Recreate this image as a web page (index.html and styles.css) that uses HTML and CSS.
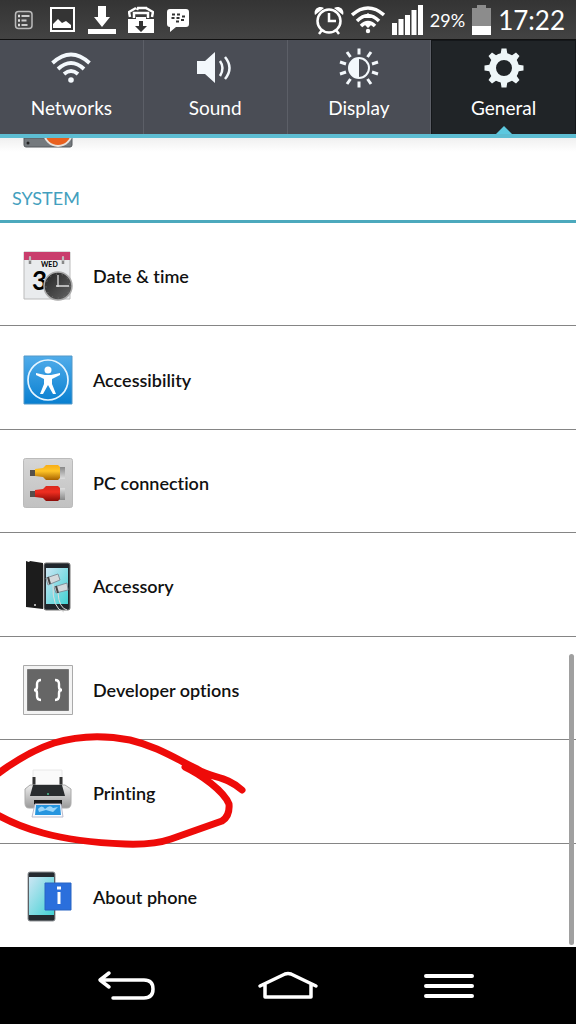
FILE: index.html
```html
<!DOCTYPE html>
<html lang="en">
<head>
<meta charset="utf-8">
<meta name="viewport" content="width=device-width, initial-scale=1">
<title>Settings</title>
<link rel="stylesheet" href="styles.css">
</head>
<body>
<div class="phone">
  <header class="status">
    <div class="status-group notices">
      <svg width="20" height="20" viewBox="0 0 20 20"><rect x="1.500" y="1.500" width="16.500" height="17" rx="3" fill="#444" stroke="#bbb" stroke-width="1.500"/><path d="M4 6h2M4 10.500h2M4 15h2" stroke="#ddd" stroke-width="2.500"/><path d="M7.500 6h8M7.500 10.500h5M7.500 15h6" stroke="#ccc" stroke-width="2"/></svg>
      <svg width="26" height="26" viewBox="0 0 26 26"><rect x="1" y="1" width="23" height="23" fill="#343434" stroke="#fff" stroke-width="2"/><path d="M3 21v-4l5-5 4 4 4-2 5 4v3z" fill="#fff"/></svg>
      <svg width="28" height="30" viewBox="0 0 28 30"><path d="M10 1h8v11h4l-8 10-8-10h4zM0 24h28v5H0z" fill="#fff"/></svg>
      <svg width="26" height="30" viewBox="0 0 26 30"><path d="M2 12L1 7l7-4M24 12l1-5-7-4" fill="none" stroke="#fff" stroke-width="2.500"/><path d="M6 13V8h14v5M9 5l1-2h9" fill="none" stroke="#fff" stroke-width="2.500"/><path d="M0 14h8v-2h10v2h8v14H0z" fill="#fff"/><path d="M11 16h4v5h4l-6 6-6-6h4z" fill="#333"/></svg>
      <svg width="24" height="26" viewBox="0 0 24 26"><path d="M4 2h16q3 0 3 3v12q0 3-3 3H10l-6 5v-5q-3 0-3-3V5q0-3 3-3z" fill="#fff"/><path d="M6 7.500h3M11 7.500h3M5.500 11h3M10.500 11h3M16 9.500h3M10 14.500h3M15 13h3" stroke="#333" stroke-width="2.200"/></svg>
    </div>
    <div class="status-group system">
      <svg width="30" height="30" viewBox="0 0 30 30"><g fill="none" stroke="#fff" stroke-width="2.500"><circle cx="15" cy="16" r="11.500"/><path d="M15 8v8h7M8 25l-3 4M22 25l3 4"/></g><path d="M1 10C-1 4 5 0 10 3zM29 10C31 4 25 0 20 3z" fill="#fff"/></svg>
      <svg width="34" height="30" viewBox="0 0 34 30"><g fill="none" stroke="#fff" stroke-width="3.500"><path d="M1 10Q17-4 33 10M6 16Q17 5 28 16"/><path d="M10 21q7-7 14 0"/></g><path d="M17 8l5 5H12zM17 23l-5-5h10z" fill="#fff"/><circle cx="17" cy="26" r="2.200" fill="#fff"/></svg>
      <svg width="31" height="32" viewBox="0 0 31 32"><path d="M0 19h5v12H0zM6.500 15h5v16h-5zM13 11h5v20h-5zM19.500 6h5v25h-5zM26 1h5v30h-5z" fill="#fff"/></svg>
      <span class="percent">29%</span>
      <svg width="19" height="32" viewBox="0 0 19 32"><path d="M5 1h9v3h5v20H0V4h5z" fill="#8c8c8c"/><path d="M0 22h19v9H0z" fill="#fff"/></svg>
      <time class="clock">17:22</time>
    </div>
  </header>

  <nav class="tabs">
    <button class="tab" type="button">
      <svg width="42" height="42" viewBox="0 0 42 42"><g fill="none" stroke="#f3f8fc" stroke-width="3.800"><path d="M2.500 16Q21-1 39.500 16M8 22Q21 10 34 22M14 27q7-6 14 0"/></g><circle cx="21" cy="33" r="2.800" fill="#f3f8fc"/></svg>
      <span>Networks</span>
    </button>
    <button class="tab" type="button">
      <svg width="42" height="42" viewBox="0 0 42 42"><path d="M3 14h8L21 5v31L11 27H3z" fill="#f3f8fc"/><path d="M26 14q5 7 0 15M31 10q9 11 0 22" fill="none" stroke="#f3f8fc" stroke-width="2.500"/></svg>
      <span>Sound</span>
    </button>
    <button class="tab" type="button">
      <svg width="42" height="42" viewBox="0 0 42 42"><circle cx="21" cy="21" r="10" fill="none" stroke="#f3f8fc" stroke-width="2"/><path d="M21 11a10 10 0 0 0 0 20z" fill="#f3f8fc"/><path d="M21 1.500v6M21 34.500v6M9 5l3.500 5M33 5l-3.500 5M9 37l3.500-5M33 37l-3.500-5M2 15l6 2M40 15l-6 2M2 27l6-2M40 27l-6-2" stroke="#f3f8fc" stroke-width="3"/></svg>
      <span>Display</span>
    </button>
    <button class="tab tab-active" type="button" aria-current="page">
      <svg width="42" height="42" viewBox="0 0 42 42"><circle cx="21" cy="21" r="11.500" fill="none" stroke="#eef6f8" stroke-width="7"/><path d="M17.500 8l1-6.500h5l1 6.500zM17.500 34l1 6.500h5l1-6.500zM8 17.500l-6.500 1v5l6.500 1zM34 17.500l6.500 1v5l-6.500 1zM9 14L5.500 9 9 5.500 14 9zM33 14l3.500-5L33 5.500 28 9zM9 28l-3.500 5L9 36.500l5-3.500zM33 28l3.500 5-3.500 3.500-5-3.500z" fill="#eef6f8"/></svg>
      <span>General</span>
    </button>
  </nav>

  <main class="content">
    <div class="previous">
      <svg width="50" height="10" viewBox="0 0 50 10"><path d="M1 0h48v7q0 2-2 2H3q-2 0-2-2z" fill="#74797d" stroke="#55595c"/><circle cx="5" cy="5" r="1.500" fill="#222"/><circle cx="35" cy="-6" r="15" fill="#e8e2dc"/><circle cx="35" cy="-6" r="13" fill="#e9601e"/></svg>
    </div>
    <h2 class="heading">SYSTEM</h2>
    <ul class="list">
      <li class="item"><a class="row" href="#date">
        <svg width="50" height="50" viewBox="0 0 50 50"><defs><linearGradient id="clockface" x2="1" y2="1"><stop stop-color="#222"/><stop offset="1" stop-color="#666"/></linearGradient></defs><path d="M1 1h46v47H1z" fill="#e9ebed" stroke="#bbb"/><path d="M1 1h46v8H1z" fill="#c93d6c"/><path d="M7 6v7M40 6v7" stroke="#888" stroke-width="2.500"/><path d="M7 5v5M40 5v5" stroke="#eee"/><text x="18" y="16" class="day-name">WED</text><text x="9" y="39" class="day-number">3</text><circle cx="35" cy="35" r="14" fill="url(#clockface)" stroke="#aaa" stroke-width="1.500"/><circle cx="35" cy="35" r="12" fill="none" stroke="#777" stroke-dasharray="1 5"/><path d="M35 24v12M33 35h13" stroke="#ddd" stroke-width="1.300"/></svg>
        <span>Date &amp; time</span></a></li>
      <li class="item"><a class="row" href="#accessibility">
        <svg width="50" height="50" viewBox="0 0 50 50"><defs><linearGradient id="access" x2="0" y2="1"><stop stop-color="#50acea"/><stop offset="1" stop-color="#087fd0"/></linearGradient></defs><path d="M1 1h48v48H1z" fill="url(#access)" stroke="#5298c8"/><circle cx="25" cy="25" r="20" fill="none" stroke="#e6f5ff" stroke-width="1.700"/><circle cx="25" cy="15" r="3.500" fill="#fff"/><path d="M13 18l9 2h6l9-2v2l-8 4v5l4 10h-3l-5-9-5 9h-3l4-10v-5l-8-4z" fill="#fff"/></svg>
        <span>Accessibility</span></a></li>
      <li class="item"><a class="row" href="#pc">
        <svg width="50" height="50" viewBox="0 0 50 50"><defs><linearGradient id="plugbase" x2="0" y2="1"><stop stop-color="#d6d6d6"/><stop offset="1" stop-color="#c1c1c1"/></linearGradient><linearGradient id="yellow" x2="0" y2="1"><stop stop-color="#f7ad16"/><stop offset=".4" stop-color="#ffc528"/><stop offset="1" stop-color="#a76200"/></linearGradient><linearGradient id="red" x2="0" y2="1"><stop stop-color="#d92a1d"/><stop offset=".4" stop-color="#ef2e20"/><stop offset="1" stop-color="#8c0b06"/></linearGradient><linearGradient id="metal" x2="0" y2="1"><stop stop-color="#888"/><stop offset=".5" stop-color="#fff"/><stop offset="1" stop-color="#888"/></linearGradient></defs><rect x=".5" y=".5" width="49" height="49" rx="2" fill="url(#plugbase)" stroke="#bbb"/><path d="M7 12h7v6H7zM7 33h7v6H7z" fill="#56504c"/><path d="M36 9h6v12h-6zM36 30h6v12h-6z" fill="url(#metal)"/><path d="M12 11l8-1 3-3h12l2 2v11l-2 2H23l-3-3-8-1z" fill="url(#yellow)"/><path d="M12 32l8-1 3-3h12l2 2v11l-2 2H23l-3-3-8-1z" fill="url(#red)"/></svg>
        <span>PC connection</span></a></li>
      <li class="item"><a class="row" href="#accessory">
        <svg width="50" height="54" viewBox="0 0 50 54"><defs><linearGradient id="screen" x2="1" y2="1"><stop stop-color="#cce6f4"/><stop offset="1" stop-color="#42d2d4"/></linearGradient></defs><path d="M3 2l3 1 1-1 13 2v46L3 48z" fill="#1c1c1c"/><circle cx="12" cy="46" r="1" fill="#ddd"/><rect x="21" y="4" width="26" height="47" rx="2" fill="#20262c" stroke="#777"/><path d="M23 9h22v36H23z" fill="url(#screen)"/><path d="M23 19l12-4 2 6-12 5zM31 28l13-4 1 7-12 3z" fill="#d4d9dc" stroke="#83919b"/><path d="M25 18l2 7M33 27l2 7" stroke="#444" stroke-width="2"/><path d="M30 25q-1 25 11 28M35 34q1 15 9 17" fill="none" stroke="#ddd"/></svg>
        <span>Accessory</span></a></li>
      <li class="item"><a class="row" href="#developer">
        <svg width="50" height="50" viewBox="0 0 50 50"><path d="M.5.500h49v49H.5z" fill="#f3f3f3" stroke="#aaa"/><path d="M4.500 4.500h41v41h-41z" fill="#666" stroke="#777"/><path d="M18 15q-4 0-4 4v3q0 3-3 3 3 0 3 3v3q0 4 4 4M32 15q4 0 4 4v3q0 3 3 3-3 0-3 3v3q0 4-4 4" fill="none" stroke="#fff" stroke-width="2.400"/></svg>
        <span>Developer options</span></a></li>
      <li class="item"><a class="row" href="#printing">
        <svg width="50" height="50" viewBox="0 0 50 50"><defs><linearGradient id="printer" x2="0" y2="1"><stop stop-color="#eee"/><stop offset="1" stop-color="#999"/></linearGradient></defs><path d="M10 2h29v15H10z" fill="#fafafa" stroke="#e8e8e8"/><path d="M11 9v9M38 9v9" stroke="#333" stroke-width="3"/><path d="M7 17h35l6 4v14q0 5-4 5H6q-4 0-4-5V21z" fill="url(#printer)" stroke="#aaa"/><path d="M10 17h29l3 11H7z" fill="#292c2e"/><circle cx="25" cy="26" r="1" fill="#4bbf92"/><path d="M11 32h28v7H11z" fill="#191919"/><path d="M12 36h26l2 13H9z" fill="#f7fbff" stroke="#bbc"/><path d="M13 37h24l1 10H12z" fill="#2695df"/><path d="M15 41q4-5 7 0 5-5 8-1l5-1-5 5-7-2-7 2z" fill="#9ad6fa"/></svg>
        <span>Printing</span></a>
        <svg class="marker" width="250" height="116" viewBox="0 0 250 116"><path d="M-4 43C20 25 36 17 54 11Q90 0 130 8C155 14 171 24 197 37C213 47 225 43 242 58M185 35C200 42 224 59 229 72Q230 84 222 89Q202 96 171 107Q154 113 125 112Q75 110 43 101Q17 94-4 82" fill="none" stroke="#ee0b09" stroke-width="7" stroke-linecap="round" stroke-linejoin="round"/></svg>
      </li>
      <li class="item"><a class="row" href="#about">
        <svg width="50" height="54" viewBox="0 0 50 54"><rect x="5" y="2" width="27" height="49" rx="2" fill="#242a30" stroke="#929699"/><path d="M6 7h25v38H6z" fill="url(#screen)"/><path d="M22 13h26v27H22z" fill="#2b6fdc" stroke="#2865c3"/><path d="M36 22v12" fill="none" stroke="#fff" stroke-width="3"/><path d="M34 18h4" stroke="#fff" stroke-width="3"/></svg>
        <span>About phone</span></a></li>
    </ul>
    <div class="scrollbar"></div>
  </main>

  <footer class="navigation">
    <button type="button" aria-label="Back"><svg width="60" height="32" viewBox="0 0 60 32"><path d="M12 3L3 10l9 7M3 10h44q9 0 9 9t-9 9H16" fill="none" stroke="#fff" stroke-width="3.500" stroke-linecap="round" stroke-linejoin="round"/></svg></button>
    <button type="button" aria-label="Home"><svg width="64" height="32" viewBox="0 0 64 32"><path d="M4 16L29 4q3-1 6 0l25 12M9 15v12h46V15" fill="none" stroke="#fff" stroke-width="3.500" stroke-linecap="round" stroke-linejoin="round"/></svg></button>
    <button type="button" aria-label="Menu"><svg width="54" height="32" viewBox="0 0 54 32"><path d="M4 6h46M4 16h46M4 26h46" stroke="#fff" stroke-width="4" stroke-linecap="round"/></svg></button>
  </footer>
</div>
</body>
</html>
```
FILE: styles.css
```css
* { box-sizing: border-box; }
body { margin: 0; font-family: Lato, "Open Sans", sans-serif; font-variant-ligatures: none; background: #fff; }
svg { display: block; flex: none; }
button { border: 0; padding: 0; font: inherit; color: inherit; background: none; }
.phone { min-height: 100vh; display: flex; flex-direction: column; }
.status { height: 40px; padding: 0 11px 0 14px; display: flex; align-items: center; justify-content: space-between; color: #fff; background: linear-gradient(#343434, #434343); border-bottom: 1px solid #111; }
.status-group { display: flex; align-items: center; }
.notices { gap: 12px; }
.notices svg:first-child { margin-right: 4px; }
.system { gap: 7px; }
.percent { font-size: 18px; }
.clock { font-size: 26px; }
.tabs { height: 98px; display: flex; color: #fff; background: #4a4d55; border-bottom: 4px solid #5dbdd2; }
.tab { flex: 1; display: flex; flex-direction: column; align-items: center; padding-top: 7px; border-right: 1px solid #5c5f67; font-size: 19px; line-height: 24px; gap: 7px; }
.tab-active { position: relative; background: #202427; border: 1px solid #14171a; border-bottom: 0; padding-top: 6px; }
.tab-active::after { content: ""; position: absolute; bottom: 0; border: 8px solid transparent; border-top: 0; border-bottom-color: #5cc8df; }
.content { position: relative; flex: 1; display: flex; flex-direction: column; background: linear-gradient(#f0f0f0, #fff 14px); }
.previous { height: 38px; padding-left: 23px; }
.heading { margin: 0; height: 47px; padding: 10px 12px 0; border-bottom: 3px solid #4ca9bd; color: #439fbe; font-size: 18px; line-height: 24px; font-weight: 400; }
.list { flex: 1; display: grid; grid-auto-rows: 1fr; margin: 0; padding: 0; list-style: none; }
.item { position: relative; display: flex; border-bottom: 1px solid #858585; }
.item:last-child { border-bottom: 0; }
.row { flex: 1; display: flex; align-items: center; gap: 20px; padding: 4px 23px 0; color: #111; text-decoration: none; font-size: 18px; font-weight: 600; }
.day-name { font: bold 7px Lato, sans-serif; }
.day-number { font: bold 26px Lato, sans-serif; }
.marker { position: absolute; left: 0; top: -8px; pointer-events: none; z-index: 1; }
.scrollbar { position: absolute; right: 2px; bottom: 2px; width: 5px; height: 36%; border-radius: 3px; background: #a0a0a0; }
.navigation { height: 77px; display: flex; align-items: center; padding: 0 46px; background: #000; }
.navigation button { flex: 1; display: flex; justify-content: center; }
```
